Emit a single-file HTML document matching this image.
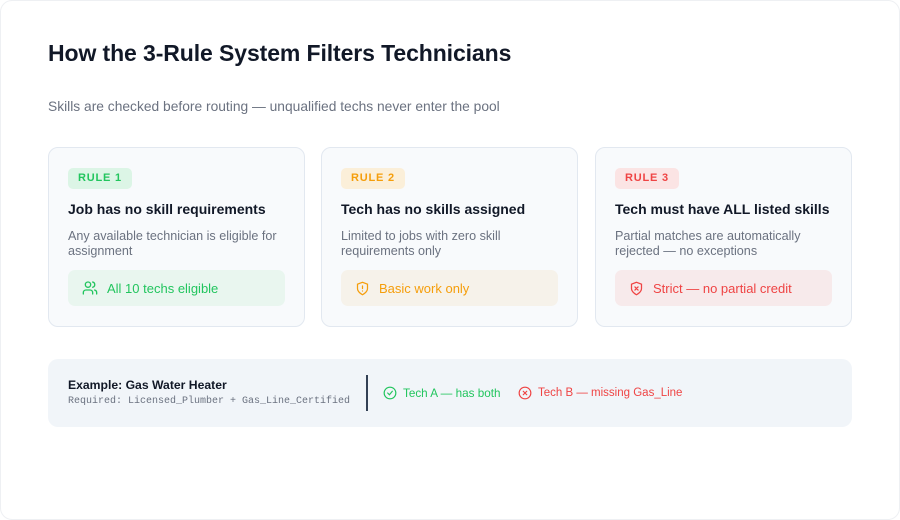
<!DOCTYPE html>
<html><head><style>
*{box-sizing:border-box;margin:0;padding:0}
body{width:900px;height:520px;background:#fff;font-family:"Liberation Sans",sans-serif;position:relative;overflow:hidden}
.frame{position:absolute;left:0;top:0;width:900px;height:520px;border:1px solid #eef0f3;border-radius:12px}
h1{position:absolute;left:48px;top:40px;font-size:23px;font-weight:700;color:#111827;letter-spacing:-0.1px}
.sub{position:absolute;left:48px;top:99px;font-size:13.8px;color:#6b7280}
.card{position:absolute;top:147px;width:257px;height:180px;background:#f8fafc;border:1px solid #e2e8f0;border-radius:10px;padding:20px 19px}
.badge{display:inline-block;height:21px;line-height:21px;padding:0 10px;border-radius:5px;font-size:11px;font-weight:700;letter-spacing:0.8px}
.t{margin-top:12px;font-size:14px;font-weight:700;color:#111827}
.d{margin-top:12px;font-size:12.6px;line-height:15px;color:#6b7280;height:30px}
.f{margin-top:11px;height:36px;border-radius:7px;display:flex;align-items:center;padding-left:14px;font-size:13px;font-weight:400}
.f svg{margin-right:9px}
.ex{position:absolute;left:48px;top:359px;width:804px;height:68px;background:#f1f5f9;border-radius:10px}
</style></head><body>
<div class="frame"></div>
<h1>How the 3-Rule System Filters Technicians</h1>
<div class="sub">Skills are checked before routing — unqualified techs never enter the pool</div>

<div class="card" style="left:48px">
<span class="badge" style="background:#dcf5e6;color:#22c55e">RULE 1</span>
<div class="t">Job has no skill requirements</div>
<div class="d">Any available technician is eligible for assignment</div>
<div class="f" style="background:#e9f6ef;color:#22c55e"><svg width="16" height="16" viewBox="0 0 24 24" fill="none" stroke="#22c55e" stroke-width="2" stroke-linecap="round"><circle cx="9" cy="7" r="4"/><path d="M2 21v-2a4 4 0 0 1 4-4h6a4 4 0 0 1 4 4v2M16 3.1a4 4 0 0 1 0 7.8M22 21v-2a4 4 0 0 0-3-3.9"/></svg>All 10 techs eligible</div>
</div>

<div class="card" style="left:321px">
<span class="badge" style="background:#fbefd9;color:#f59e0b">RULE 2</span>
<div class="t">Tech has no skills assigned</div>
<div class="d">Limited to jobs with zero skill requirements only</div>
<div class="f" style="background:#f6f2ea;color:#f59e0b"><svg width="15" height="15" viewBox="0 0 24 24" fill="none" stroke="#f59e0b" stroke-width="2" stroke-linecap="round"><path d="M12 22s8-4 8-10V5l-8-3-8 3v7c0 6 8 10 8 10z"/><path d="M12 8v4M12 16h.01"/></svg>Basic work only</div>
</div>

<div class="card" style="left:595px">
<span class="badge" style="background:#fbe4e4;color:#ef4444">RULE 3</span>
<div class="t">Tech must have ALL listed skills</div>
<div class="d">Partial matches are automatically rejected — no exceptions</div>
<div class="f" style="background:#f7eaeb;color:#ef4444"><svg width="15" height="15" viewBox="0 0 24 24" fill="none" stroke="#ef4444" stroke-width="2" stroke-linecap="round"><path d="M12 22s8-4 8-10V5l-8-3-8 3v7c0 6 8 10 8 10z"/><path d="M9.5 9.5l5 5M14.5 9.5l-5 5"/></svg>Strict — no partial credit</div>
</div>

<div class="ex">
<div style="position:absolute;left:20px;top:19px;font-size:12.2px;font-weight:700;color:#111827">Example: Gas Water Heater</div>
<div style="position:absolute;left:20px;top:37px;font-family:'Liberation Mono',monospace;font-size:10px;color:#6b7280">Required: Licensed_Plumber + Gas_Line_Certified</div>
<div style="position:absolute;left:318px;top:16px;width:2px;height:36px;background:#334155"></div>
<div style="position:absolute;left:335px;top:27px;display:flex;align-items:center;font-size:11.7px;color:#22c55e"><svg width="14" height="14" viewBox="0 0 24 24" fill="none" stroke="#22c55e" stroke-width="2" stroke-linecap="round" style="margin-right:6px"><circle cx="12" cy="12" r="10"/><path d="M8 12l3 3 5-6"/></svg>Tech A — has both</div>
<div style="position:absolute;left:470px;top:27px;display:flex;align-items:center;font-size:11.5px;color:#ef4444"><svg width="14" height="14" viewBox="0 0 24 24" fill="none" stroke="#ef4444" stroke-width="2" stroke-linecap="round" style="margin-right:6px"><circle cx="12" cy="12" r="10"/><path d="M9 9l6 6M15 9l-6 6"/></svg>Tech B — missing Gas_Line</div>
</div>
</body></html>
